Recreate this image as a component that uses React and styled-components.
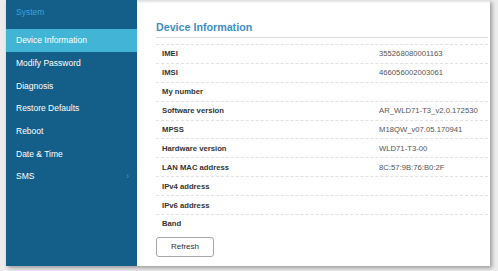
import React from "react";
import styled, { createGlobalStyle } from "styled-components";

const Global = createGlobalStyle`
  html, body { margin: 0; padding: 0; }
  body {
    background: #ececec;
    font-family: "Liberation Sans", Arial, sans-serif;
    width: 498px;
    height: 271px;
    overflow: hidden;
  }
`;

const Frame = styled.div`
  margin-left: 6px;
  width: 484px;
  height: 266px;
  display: flex;
  background: #fff;
  box-shadow: 2px 2px 4px rgba(0, 0, 0, 0.35);
`;

const Sidebar = styled.nav`
  width: 131px;
  flex: none;
  background: #135f8a;
  display: flex;
  flex-direction: column;
`;

const SideHeader = styled.div`
  height: 29px;
  padding: 7px 0 0 10px;
  box-sizing: border-box;
  font-size: 8.5px;
  line-height: 11px;
  color: #3ea3d2;
`;

const SideItem = styled.div`
  height: 22.7px;
  display: flex;
  align-items: center;
  justify-content: space-between;
  padding: 0 8px 0 10px;
  font-size: 8.5px;
  color: #fff;
  background: ${(p) => (p.$active ? "#42b5d7" : "transparent")};
`;

const Chevron = styled.span`
  color: #3ea3d2;
  font-size: 9px;
`;

const Main = styled.main`
  flex: 1;
  padding: 0 2px 0 19px;
  display: flex;
  flex-direction: column;
  box-shadow: inset 0 3px 2px -1px rgba(0, 0, 0, 0.12);
`;

const Title = styled.h1`
  margin: 0;
  padding: 21px 0 3px;
  font-size: 10.7px;
  line-height: 13px;
  font-weight: bold;
  color: #3b8fc6;
  border-bottom: 1px solid #dcdcdc;
`;

const Table = styled.div`
  margin-top: 6px;
  display: flex;
  flex-direction: column;
`;

const Row = styled.div`
  height: 18.9px;
  box-sizing: border-box;
  display: grid;
  grid-template-columns: 223px 1fr;
  align-items: center;
  border-top: 1px dashed #e2e2e2;
  font-size: 7.7px;
`;

const Label = styled.span`
  padding-left: 6px;
  font-weight: bold;
  color: #333;
`;

const Value = styled.span`
  color: #555;
`;

const Button = styled.button`
  margin-top: 4px;
  width: 58px;
  height: 20px;
  border: 1px solid #a8a8a8;
  border-radius: 3px;
  background: #fff;
  font-family: "Liberation Sans", Arial, sans-serif;
  font-size: 8px;
  color: #333;
  padding: 0;
`;

const menu = [
  "Device Information",
  "Modify Password",
  "Diagnosis",
  "Restore Defaults",
  "Reboot",
  "Date & Time",
  "SMS",
];

const rows = [
  ["IMEI", "355268080001163"],
  ["IMSI", "466056002003061"],
  ["My number", ""],
  ["Software version", "AR_WLD71-T3_v2.0.172530"],
  ["MPSS", "M18QW_v07.05.170941"],
  ["Hardware version", "WLD71-T3-00"],
  ["LAN MAC address", "8C:57:9B:76:B0:2F"],
  ["IPv4 address", ""],
  ["IPv6 address", ""],
  ["Band", ""],
];

export default function App() {
  return (
    <>
      <Global />
      <Frame>
        <Sidebar>
          <SideHeader>System</SideHeader>
          {menu.map((m, i) => (
            <SideItem key={m} $active={i === 0}>
              <span>{m}</span>
              {m === "SMS" && <Chevron>›</Chevron>}
            </SideItem>
          ))}
        </Sidebar>
        <Main>
          <Title>Device Information</Title>
          <Table>
            {rows.map(([k, v]) => (
              <Row key={k}>
                <Label>{k}</Label>
                <Value>{v}</Value>
              </Row>
            ))}
          </Table>
          <div>
            <Button>Refresh</Button>
          </div>
        </Main>
      </Frame>
    </>
  );
}
